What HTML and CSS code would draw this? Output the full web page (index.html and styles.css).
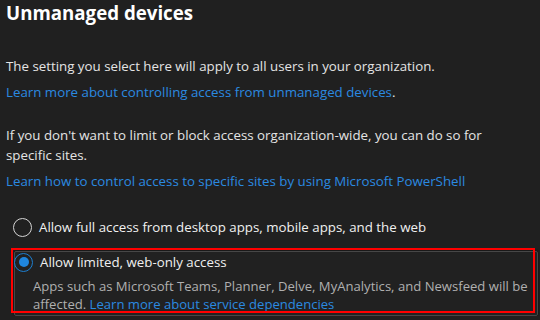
FILE: index.html
```html
<!DOCTYPE html>
<html lang="en">
<head>
    <meta charset="UTF-8">
    <title>Unmanaged devices</title>
    <link rel="stylesheet" href="styles.css">
</head>
<body>
    <div class="panel">
        <h2 class="title">Unmanaged devices</h2>

        <p class="text first">The setting you select here will apply to all users in your organization.</p>
        <p class="text link-line"><a href="#">Learn more about controlling access from unmanaged devices</a>.</p>

        <p class="text spaced">If you don't want to limit or block access organization-wide, you can do so for specific sites.</p>
        <p class="text link-line"><a href="#">Learn how to control access to specific sites by using Microsoft PowerShell</a></p>

        <div class="options">
            <label class="option">
                <span class="radio"></span>
                <span class="option-label">Allow full access from desktop apps, mobile apps, and the web</span>
            </label>

            <div class="option-card">
                <label class="option">
                    <span class="radio checked"></span>
                    <span class="option-label">Allow limited, web-only access</span>
                </label>
                <p class="option-desc">Apps such as Microsoft Teams, Planner, Delve, MyAnalytics, and Newsfeed will be affected. <a href="#">Learn more about service dependencies</a></p>
                <div class="highlight"></div>
            </div>
        </div>
    </div>
</body>
</html>
```

FILE: styles.css
```css
html,
body {
    margin: 0;
    padding: 0;
}

body {
    background: #202020;
    color: #e4e4e4;
    font: 13.3px 'Open Sans', 'Noto Sans', sans-serif;
    line-height: 20px;
    overflow: hidden;
}

.panel {
    padding: 0 0 0 6px;
}

.title {
    margin: 0;
    padding-top: 0;
    font-size: 18.7px;
    line-height: 26px;
    font-weight: 700;
    color: #ffffff;
}

.text {
    margin: 0;
    max-width: 500px;
}

.text.first {
    margin-top: 30px;
}

.text.link-line {
    margin-top: 6px;
}

.text.spaced {
    margin-top: 23px;
}

a {
    color: #2b8ae0;
    text-decoration: none;
}

.options {
    margin-top: 26px;
}

.option {
    display: flex;
    align-items: center;
    gap: 7px;
    padding-left: 7px;
    color: #f0f0f0;
}

.radio {
    width: 19px;
    height: 19px;
    border: 1px solid #d4d4d4;
    border-radius: 50%;
    box-sizing: border-box;
    flex: none;
    position: relative;
}

.radio.checked {
    border-color: #1d7fd0;
}

.radio.checked::after {
    content: "";
    position: absolute;
    left: 3.5px;
    top: 3.5px;
    width: 10px;
    height: 10px;
    border-radius: 50%;
    background: #1f86de;
}

.option-card {
    position: relative;
    margin: 14px 2px 0 8px;
    padding: 0 0 2px 0;
    border: 1px solid #474747;
    border-radius: 2px;
    background: #212121;
    box-shadow: 0 0 3px rgba(0, 0, 0, 0.6);
}

.option-card .option {
    padding-left: 0;
    margin-left: -1px;
}

.option-desc {
    margin: 5px 0 0 18px;
    font-size: 13.1px;
    color: #b0b0b0;
    line-height: 18px;
}

.highlight {
    position: absolute;
    left: -4px;
    top: -4px;
    right: 2px;
    bottom: 2px;
    border: 2px solid #ff0000;
}
```
